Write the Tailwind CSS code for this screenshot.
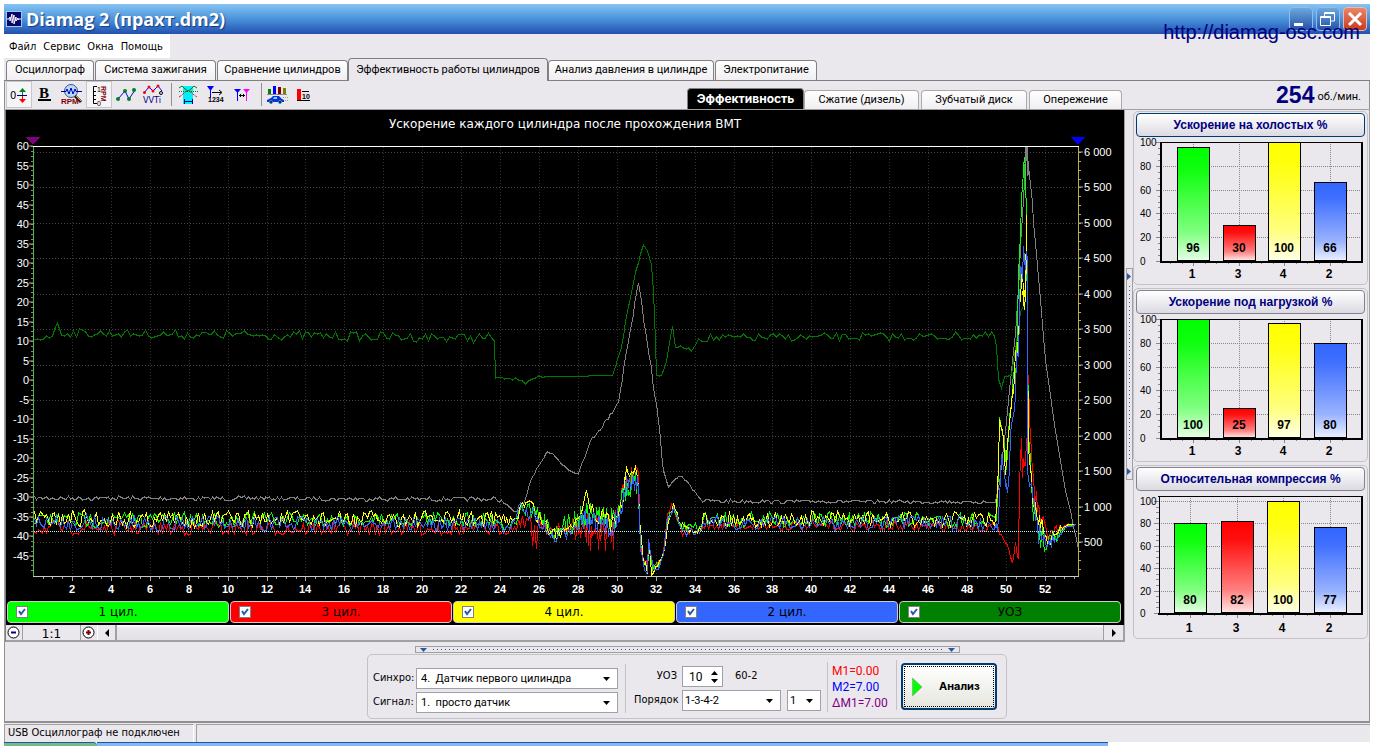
<!DOCTYPE html>
<html lang="ru">
<head>
<meta charset="utf-8">
<title>Diamag 2</title>
<script src="https://cdn.jsdelivr.net/npm/@tailwindcss/browser@4"></script>
</head>
<body class="flex h-screen flex-col overflow-hidden bg-white px-1 pt-1 font-['DejaVu_Sans_Condensed','Liberation_Sans',sans-serif] text-[11px] text-black">
<div class="relative flex min-h-0 flex-1 flex-col bg-[#ebe8ed]">

  <header class="flex h-[30px] shrink-0 items-center justify-between bg-linear-to-b from-[#86c4f2] via-[#4a92dc] via-50% to-[#2450ae] pl-0.5 pr-[3px]">
    <div class="flex items-center gap-1">
      <svg class="size-4" viewBox="0 0 16 16"><rect width="16" height="16" fill="#05056e"/><rect x=".5" y=".5" width="15" height="15" fill="none" stroke="#9cc8f4"/><path d="M1 8H3L4 6V10L6 3V12L8 4V13L10 6V10L12 7V9L13 8H15" fill="none" stroke="#fff"/></svg>
      <h1 class="font-['Open_Sans',sans-serif] text-[18px] font-bold leading-6 text-white [text-shadow:1px_1px_1px_#123a80]">Diamag 2 (прахт.dm2)</h1>
    </div>
    <div class="flex gap-[3px]">
      <button aria-label="Свернуть" class="size-6 rounded-sm border border-[#8fbdf0] bg-linear-to-b from-[#6ea9dc] to-[#2450a8]"><svg viewBox="0 0 22 22"><rect x="4" y="15" width="9" height="3" fill="#fff"/></svg></button>
      <button aria-label="Восстановить" class="size-6 rounded-sm border border-[#8fbdf0] bg-linear-to-b from-[#6ea9dc] to-[#2450a8]"><svg viewBox="0 0 22 22" fill="none" stroke="#fff"><path d="M7.500 8V4.500H17.500V13H14M7 5.500H18M3.500 8.500H13.500V17.500H3.500ZM3 9.500H14"/></svg></button>
      <button aria-label="Закрыть" class="size-6 rounded-sm border border-[#f0b8a8] bg-linear-to-b from-[#ec8468] to-[#c83818]"><svg viewBox="0 0 22 22"><path d="M5 5L17 17M17 5L5 17" stroke="#fff" stroke-width="3"/></svg></button>
    </div>
  </header>
  <a href="http://diamag-osc.com" class="absolute right-[10px] top-4 font-['Liberation_Sans',sans-serif] text-[20px] leading-6 text-[#000080]">http://diamag-osc.com</a>

  <nav class="flex h-6 w-[166px] shrink-0 items-center gap-[7px] bg-white pl-[5px] pt-[3px]">
    <button>Файл</button><button>Сервис</button><button>Окна</button><button>Помощь</button>
  </nav>

  <div role="tablist" class="flex h-[23px] shrink-0 items-end border-b border-[#808080] pl-0.5 font-['Roboto','Liberation_Sans',sans-serif] text-[11px]">
    <button role="tab" class="mr-px h-5 w-[88px] rounded-t-sm border border-b-0 border-[#808080] bg-linear-to-b from-white to-[#f0eef1]">Осциллограф</button>
    <button role="tab" class="mr-px h-5 w-[121px] rounded-t-sm border border-b-0 border-[#808080] bg-linear-to-b from-white to-[#f0eef1]">Система зажигания</button>
    <button role="tab" class="h-5 w-[131px] rounded-t-sm border border-b-0 border-[#808080] bg-linear-to-b from-white to-[#f0eef1]">Сравнение цилиндров</button>
    <button role="tab" aria-selected="true" class="-mb-px h-[23px] w-[200px] rounded-t-sm border border-b-0 border-[#808080] bg-[#ebe8ed]">Эффективность работы цилиндров</button>
    <button role="tab" class="mr-px h-5 w-[166px] rounded-t-sm border border-b-0 border-[#808080] bg-linear-to-b from-white to-[#f0eef1]">Анализ давления в цилиндре</button>
    <button role="tab" class="h-5 w-[102px] rounded-t-sm border border-b-0 border-[#808080] bg-linear-to-b from-white to-[#f0eef1]">Электропитание</button>
  </div>

  <div class="flex h-[28px] shrink-0 border-l border-r border-[#909090]">
    <div class="flex h-[27px] shrink-0 pl-px">
      <button aria-label="Ноль" class="h-[27px] w-[26px] border border-[#c8c6ca] bg-[#f5f4f6]"><svg class="h-[25px] w-6" viewBox="7 82 24 25"><text x="10" y="99" font-size="10" font-family="DejaVu Sans">0</text><path d="M17 95.500H27" stroke="#000080"/><path d="M22.500 88L26 92H19Z" fill="#008020"/><path d="M22.500 91V95" stroke="#008020"/><path d="M22.500 103L26 99H19Z" fill="#f00"/><path d="M22.500 96V100" stroke="#f00"/></svg></button>
      <button aria-label="Жирный" class="h-[27px] w-[26px]"><svg class="h-[27px] w-[26px]" viewBox="32 81 26 27"><text x="39" y="98" font-size="15" font-weight="bold" font-family="Liberation Serif">B</text><path d="M38 100H51" stroke="#000" stroke-width="2"/></svg></button>
      <button aria-label="Поиск RPM" class="h-[27px] w-7"><svg class="h-[27px] w-7" viewBox="58 81 28 27"><circle cx="71" cy="91" r="6.500" fill="#b4d8ff" stroke="#405878"/><path d="M61 91.500H66L67 89 69 94 71 88 73 94 75 89 76 91.500H82" fill="none" stroke="#0000a0"/><path d="M75 96L81 102" stroke="#222" stroke-width="3"/><path d="M76 96L81 101" stroke="#d8a840"/><text x="61" y="104" font-size="8" font-weight="bold" font-family="Liberation Sans" fill="#800000">RPM</text></svg></button>
      <button aria-label="Шкала RPM" class="h-[27px] w-[26px] border border-[#c8c6ca] bg-[#f5f4f6]"><svg class="h-[25px] w-6" viewBox="88 82 24 25"><path d="M98 86.500H94.500V103.500H98M94 91.500H97M94 95.500H97M94 99.500H97" fill="none" stroke="#000"/><text x="98" y="92" font-size="7" font-family="Liberation Sans">1</text><text x="98" y="106" font-size="7" font-family="Liberation Sans">0</text><text transform="translate(102 86) rotate(90)" font-size="7" font-weight="bold" font-family="Liberation Sans" fill="#800000">RPM</text></svg></button>
      <button aria-label="График" class="h-[27px] w-7"><svg class="h-[27px] w-7" viewBox="112 81 28 27"><path d="M118 99L125 91L129 99L135 90" fill="none" stroke="#0000ff"/><g fill="#008020"><circle cx="118" cy="99" r="2"/><circle cx="125" cy="91" r="2"/><circle cx="129" cy="99" r="2"/><circle cx="134" cy="90" r="2"/></g></svg></button>
      <button aria-label="VVTi" class="h-[27px] w-7"><svg class="h-[27px] w-7" viewBox="140 81 28 27"><path d="M144 93L149 87L153 91L158 86L162 91" fill="none" stroke="#0000ff"/><g fill="#f00"><circle cx="144.500" cy="92.500" r="1.500"/><circle cx="149" cy="87" r="1.500"/><circle cx="153" cy="91" r="1.500"/><circle cx="158" cy="86" r="1.500"/></g><circle cx="161" cy="93" r="1.500" fill="none" stroke="#000"/><text x="143" y="103" font-size="9" font-family="DejaVu Sans Condensed" fill="#000080">VVTi</text></svg></button>
      <span class="mx-[3px] my-0.5 w-px bg-[#909090]"></span>
      <button aria-label="Фаза" class="h-[27px] w-7"><svg class="h-[27px] w-7" viewBox="175 81 28 27"><rect x="183" y="86" width="10" height="18" fill="#00f0f8"/><path d="M179 88L182 86L185 89L188 91L191 89L194 86L197 88" fill="none" stroke="#008020"/><path d="M179 97L182 95L185 92L188 91L191 92L194 95L197 97" fill="none" stroke="#e02020" stroke-dasharray="3 1"/><path d="M179 91.500H198" stroke="#008020" stroke-dasharray="1 1"/><path d="M184 101.500H193M184.500 99V104M192.500 99V104" stroke="#0000a0"/></svg></button>
      <button aria-label="Метки цилиндров" class="h-[27px] w-7"><svg class="h-[27px] w-7" viewBox="203 81 28 27"><path d="M207 86H214L210.500 91Z" fill="#00f"/><path d="M210.500 88V98" stroke="#00f"/><path d="M212 92.500H221M219 90L222 92.500L219 95" fill="none" stroke="#000"/><text x="208" y="102" font-size="7" font-weight="bold" font-family="Liberation Sans">1234</text></svg></button>
      <button aria-label="Расстояние" class="h-[27px] w-7"><svg class="h-[27px] w-7" viewBox="231 81 28 27"><path d="M234 89H241L237.500 93Z" fill="#00f"/><path d="M237.500 90V101" stroke="#00f"/><path d="M243 89H250L246.500 93Z" fill="#f0f"/><path d="M246.500 90V101" stroke="#f0f"/><path d="M239 95.500H245M241 94L239.500 95.500L241 97M243 94L244.500 95.500L243 97" stroke="#000" fill="none"/></svg></button>
      <span class="mx-0.5 my-0.5 w-px bg-[#909090]"></span>
      <button aria-label="Автомобиль" class="h-[27px] w-7"><svg class="h-[27px] w-7" viewBox="264 81 28 27"><g stroke-width="3"><path d="M269.500 94V89" stroke="#008000"/><path d="M274.500 94V86" stroke="#00f"/><path d="M279.500 94V87" stroke="#800000"/><path d="M284.500 94V88" stroke="#808000"/></g><path d="M267 94.500H287" stroke="#888"/><path d="M267 100L271 98L273 96H279L282 99L284 100V102H267Z" fill="#1030e0"/><path d="M274 97H277V99H273Z" fill="#60e0f0"/><g fill="#101050" stroke="#20a0a0"><circle cx="271" cy="102" r="1.500"/><circle cx="280" cy="102" r="1.500"/></g><path d="M283 97.500H288M285 100.500H288" stroke="#999" stroke-dasharray="1 1"/></svg></button>
      <button aria-label="Десять" class="h-[27px] w-7"><svg class="h-[27px] w-7" viewBox="292 81 28 27"><rect x="297" y="89" width="4" height="11" fill="#f00"/><path d="M297 100.500H310M302 91.500H309" stroke="#000"/><text x="302" y="99" font-size="7" font-weight="bold" font-family="Liberation Sans">10</text></svg></button>
    </div>
    <div role="tablist" class="ml-auto flex items-end font-['Roboto','Liberation_Sans',sans-serif] text-[11px]">
      <button role="tab" aria-selected="true" class="h-[21px] w-[117px] rounded-t-sm border border-b-0 border-[#808080] bg-black font-['Inter',sans-serif] text-[12px] font-bold text-white">Эффективность</button>
      <button role="tab" class="mr-0.5 h-[19px] w-[115px] rounded-t-sm border border-b-0 border-[#aaa] bg-linear-to-b from-white to-[#f0eef1]">Сжатие (дизель)</button>
      <button role="tab" class="mr-0.5 h-[19px] w-[106px] rounded-t-sm border border-b-0 border-[#aaa] bg-linear-to-b from-white to-[#f0eef1]">Зубчатый диск</button>
      <button role="tab" class="h-[19px] w-[93px] rounded-t-sm border border-b-0 border-[#aaa] bg-linear-to-b from-white to-[#f0eef1]">Опережение</button>
    </div>
    <div class="flex w-[247px] items-center justify-end gap-[3px] pr-2">
      <strong class="font-['Liberation_Sans',sans-serif] text-[23px] leading-6 text-[#000080]">254</strong>
      <span class="pt-1 font-['Roboto',sans-serif] text-[11px]">об./мин.</span>
    </div>
  </div>

  <main class="flex min-h-0 flex-1 border-x border-t border-[#a0a0a0]">
    <section class="flex min-w-0 flex-1 flex-col border-l border-[#808080]">
      <div class="flex min-h-0 flex-1 flex-col bg-black">
        <svg id="scope" class="min-h-0 w-full flex-1" viewBox="6 110 1118 490"></svg>
        <div class="grid shrink-0 grid-cols-5 gap-px px-px pb-0.5 pr-[3px] font-['DejaVu_Sans',sans-serif] text-[12px]">
          <label class="relative flex h-[22px] items-center justify-center rounded border border-[#ccc] bg-[#00ff00]"><input type="checkbox" checked class="absolute left-2 size-3 appearance-none border border-[#808080] bg-white"><svg class="absolute left-2 size-3" viewBox="0 0 12 12"><path d="M3 5L5 8L9 3" fill="none" stroke="#2858a8" stroke-width="2"/></svg>1 цил.</label>
          <label class="relative flex h-[22px] items-center justify-center rounded border border-[#ccc] bg-[#ff0000]"><input type="checkbox" checked class="absolute left-2 size-3 appearance-none border border-[#808080] bg-white"><svg class="absolute left-2 size-3" viewBox="0 0 12 12"><path d="M3 5L5 8L9 3" fill="none" stroke="#2858a8" stroke-width="2"/></svg>3 цил.</label>
          <label class="relative flex h-[22px] items-center justify-center rounded border border-[#ccc] bg-[#ffff00]"><input type="checkbox" checked class="absolute left-2 size-3 appearance-none border border-[#808080] bg-white"><svg class="absolute left-2 size-3" viewBox="0 0 12 12"><path d="M3 5L5 8L9 3" fill="none" stroke="#2858a8" stroke-width="2"/></svg>4 цил.</label>
          <label class="relative flex h-[22px] items-center justify-center rounded border border-[#ccc] bg-[#3366ff]"><input type="checkbox" checked class="absolute left-2 size-3 appearance-none border border-[#808080] bg-white"><svg class="absolute left-2 size-3" viewBox="0 0 12 12"><path d="M3 5L5 8L9 3" fill="none" stroke="#2858a8" stroke-width="2"/></svg>2 цил.</label>
          <label class="relative flex h-[22px] items-center justify-center rounded border border-[#ccc] bg-[#008000]"><input type="checkbox" checked class="absolute left-2 size-3 appearance-none border border-[#808080] bg-white"><svg class="absolute left-2 size-3" viewBox="0 0 12 12"><path d="M3 5L5 8L9 3" fill="none" stroke="#2858a8" stroke-width="2"/></svg>УОЗ</label>
        </div>
      </div>
      <div class="flex h-[17px] shrink-0 border-b-2 border-[#a0a0a0]">
        <button aria-label="Уменьшить" class="w-[17px] border-r border-[#a0a0a0]"><svg class="size-[15px]" viewBox="0 0 15 15"><circle cx="7.500" cy="7.500" r="5.500" fill="#fff" stroke="#000"/><path d="M5 7.500H10" stroke="#000080" stroke-width="2"/></svg></button>
        <output class="w-[58px] border-r border-[#a0a0a0] pt-px text-center font-['DejaVu_Sans',sans-serif] text-[12px] leading-4">1:1</output>
        <button aria-label="Увеличить" class="w-[17px] border-r border-white"><svg class="size-[15px]" viewBox="0 0 15 15"><circle cx="7.500" cy="7.500" r="5.500" fill="#fff" stroke="#000"/><path d="M5 7.500H10M7.500 5V10" stroke="#800000" stroke-width="2"/></svg></button>
        <button aria-label="Влево" class="flex w-[18px] items-center justify-center border-r border-[#a0a0a0]"><svg class="h-2 w-1" viewBox="0 0 4 8"><path d="M4 0V8L0 4Z"/></svg></button>
        <span class="flex-1 border-x border-[#a0a0a0] bg-linear-to-b from-white via-[#ebe8ed] via-20% to-[#e4e1e6]"></span>
        <button aria-label="Вправо" class="flex w-5 items-center justify-center border-r border-[#a0a0a0]"><svg class="h-2 w-1" viewBox="0 0 4 8"><path d="M0 0V8L4 4Z"/></svg></button>
      </div>
    </section>

    <div class="flex w-[9px] shrink-0 items-center justify-center border-l border-[#a0a0a0]">
      <button aria-label="Скрыть панель" class="mb-1 flex h-[212px] w-[7px] flex-col items-center justify-between border border-[#a0a0a0] py-1">
        <svg class="h-[7px] w-1" viewBox="0 0 4 7"><path d="M0 0V7L4 3.500Z" fill="#2858a8"/></svg>
        <span class="my-1.5 w-px flex-1 bg-[repeating-linear-gradient(to_bottom,#2858a8_0_1px,transparent_1px_4px)]"></span>
        <svg class="h-[7px] w-1" viewBox="0 0 4 7"><path d="M0 0V7L4 3.500Z" fill="#2858a8"/></svg>
      </button>
    </div>

    <aside class="flex w-[236px] shrink-0 flex-col gap-[3px] pr-px pt-px font-['Liberation_Sans',sans-serif]">
      <section class="h-[174px] rounded-[5px] border border-[#c4c2c8] px-0.5 pt-px">
        <button class="block h-6 w-full rounded-sm border border-[#003c74] bg-linear-to-b from-white to-[#dcdae2] text-[12px] font-bold leading-4 text-[#000080]">Ускорение на холостых %</button>
        <svg class="bars mt-px w-full" viewBox="1136 138 229 145"></svg>
      </section>
      <section class="h-[174px] rounded-[5px] border border-[#c4c2c8] px-0.5 pt-px">
        <button class="block h-6 w-full rounded-sm border border-[#84828c] bg-linear-to-b from-white to-[#dcdae2] text-[12px] font-bold leading-4 text-[#000080]">Ускорение под нагрузкой %</button>
        <svg class="bars mt-px w-full" viewBox="1136 138 229 145"></svg>
      </section>
      <section class="h-[174px] rounded-[5px] border border-[#c4c2c8] px-0.5 pt-px">
        <button class="block h-6 w-full rounded-sm border border-[#84828c] bg-linear-to-b from-white to-[#dcdae2] text-[12px] font-bold leading-4 text-[#000080]">Относительная компрессия %</button>
        <svg class="bars mt-px w-full" viewBox="1136 138 229 145"></svg>
      </section>
    </aside>
  </main>

  <section class="flex h-[81px] shrink-0 flex-col items-center border-x border-b-2 border-[#909090] pt-1">
    <button aria-label="Скрыть настройки" class="flex h-[7px] w-[545px] shrink-0 items-center justify-between border border-[#a0a0a0] px-1">
      <svg class="h-1 w-[7px]" viewBox="0 0 7 4"><path d="M0 0H7L3.500 4Z" fill="#2858a8"/></svg>
      <span class="mx-1.5 h-px flex-1 bg-[repeating-linear-gradient(to_right,#2858a8_0_1px,transparent_1px_4px)]"></span>
      <svg class="h-1 w-[7px]" viewBox="0 0 7 4"><path d="M0 0H7L3.500 4Z" fill="#2858a8"/></svg>
    </button>
    <form class="mt-px flex h-[65px] w-[640px] shrink-0 rounded-[5px] border border-[#c4c2c8] pl-[5px]">
      <div class="grid grid-cols-[43px_202px] content-start items-center gap-y-[3px] pt-[13px]">
        <label for="sync">Синхро:</label>
        <div class="relative"><select id="sync" class="block h-[21px] w-full appearance-none border border-[#a0a0a8] bg-white pl-1 font-['Roboto',sans-serif] text-[11px] leading-4"><option>4.&nbsp; Датчик первого цилиндра</option></select><svg class="pointer-events-none absolute right-2 top-[9px] h-1 w-[7px]" viewBox="0 0 7 4"><path d="M0 0H7L3.500 4Z"/></svg></div>
        <label for="signal">Сигнал:</label>
        <div class="relative"><select id="signal" class="block h-[21px] w-full appearance-none border border-[#a0a0a8] bg-white pl-1 font-['Roboto',sans-serif] text-[11px] leading-4"><option>1.&nbsp; просто датчик</option></select><svg class="pointer-events-none absolute right-2 top-[9px] h-1 w-[7px]" viewBox="0 0 7 4"><path d="M0 0H7L3.500 4Z"/></svg></div>
      </div>
      <span class="ml-[7px] mt-[9px] h-[49px] w-px bg-[#c4c2c8]"></span>
      <div class="ml-2 grid w-[188px] grid-cols-[43px_1fr] content-start items-center gap-x-[5px] gap-y-[3px] pt-[11px]">
        <label for="uoz" class="text-right">УОЗ</label>
        <div class="flex items-center gap-3">
          <div class="flex h-[21px] w-[41px] items-center justify-between border border-[#a0a0a8] bg-white pr-1"><input id="uoz" value="10" class="w-7 pl-1.5 font-['Roboto',sans-serif] text-[12px] outline-none"><svg class="h-3 w-[7px] shrink-0" viewBox="0 0 7 12"><path d="M0 4H7L3.500 0ZM0 8H7L3.500 12Z"/></svg></div>
          <span>60-2</span>
        </div>
        <label for="order" class="text-right">Порядок</label>
        <div class="flex gap-[6px]">
          <div class="relative"><select id="order" class="block h-[21px] w-[99px] appearance-none border border-[#a0a0a8] bg-white pl-[2px] font-['Roboto',sans-serif] text-[11px] leading-4"><option>1-3-4-2</option></select><svg class="pointer-events-none absolute right-2 top-[9px] h-1 w-[7px]" viewBox="0 0 7 4"><path d="M0 0H7L3.500 4Z"/></svg></div>
          <div class="relative"><select aria-label="Цилиндр" class="block h-[21px] w-[34px] appearance-none border border-[#a0a0a8] bg-white pl-[2px] font-['Roboto',sans-serif] text-[11px] leading-4"><option>1</option></select><svg class="pointer-events-none absolute right-2 top-[9px] h-1 w-[7px]" viewBox="0 0 7 4"><path d="M0 0H7L3.500 4Z"/></svg></div>
        </div>
      </div>
      <span class="ml-[5px] mt-[7px] h-[50px] w-px bg-[#c4c2c8]"></span>
      <div class="ml-1 w-16 pt-2 font-['Roboto',sans-serif] text-[12px] leading-4">
        <p class="text-[#f00]">M1=0.00</p><p class="text-[#00f]">M2=7.00</p><p class="text-[#800080]">ΔM1=7.00</p>
      </div>
      <span class="mt-[5px] h-[50px] w-px bg-[#c4c2c8]"></span>
      <button type="button" class="ml-1 mt-2 flex h-[47px] w-[96px] rounded-sm border-2 border-[#003c74] bg-linear-to-b from-white to-[#e6e6de] p-px font-['Inter',sans-serif] text-[11px] font-bold"><span class="flex size-full items-center gap-[17px] border border-dotted border-black pl-[7px]"><svg class="h-5 w-[10px]" viewBox="0 0 10 20"><path d="M.5 1V19L10 10Z" fill="#0f0" stroke="#888" stroke-width=".5"/></svg>Анализ</span></button>
    </form>
  </section>

  <footer class="flex h-[19px] shrink-0 gap-0.5 pt-px">
    <span class="w-[190px] border-l border-t border-r border-[#a0a0a0] border-r-white pl-[3px] leading-4">USB Осциллограф не подключен</span>
    <span class="flex-1 border-l border-t border-[#a0a0a0]"></span>
  </footer>
</div>
<div class="flex h-1 shrink-0 pr-[262px]">
  <span class="w-[93px] rounded-tr border-t border-[#2450ae] bg-[#74bc80]"></span><span class="flex-1 border-t border-[#2450ae] bg-[#7ebcf0]"></span>
</div>

<script>
let seed = 7;
const rnd = () => (seed = (seed * 16807) % 2147483647) / 2147483647 * 2 - 1;

// Polyline through [x, y, noise amplitude] points, sampled every `step` pixels;
// noisy stretches are sampled at every pixel.
function trace(points, color, step) {
  const out = [];
  for (let i = 0; i < points.length - 1; i++) {
    const [x0, y0, a0] = points[i], [x1, y1, a1] = points[i + 1];
    const n = Math.max(1, Math.round((x1 - x0) / (a0 > 9 ? 1 : step)));
    for (let k = 0; k < n; k++) {
      const t = k / n;
      const y = y0 + (y1 - y0) * t + rnd() * (a0 + (a1 - a0) * t);
      out.push(Math.round(x0 + (x1 - x0) * t) + '.5,' + Math.max(146, Math.min(574, Math.round(y))) + '.5');
    }
  }
  const last = points[points.length - 1];
  out.push(last[0] + ',' + last[1]);
  return `<polyline points="${out.join(' ')}" fill="none" stroke="${color}"/>`;
}
const line = (x1, y1, x2, y2, c, extra = '') => `<path d="M${x1} ${y1}L${x2} ${y2}" stroke="${c}" ${extra}/>`;

let s = '<rect x="6" y="110" width="1118" height="490" fill="#000"/><g shape-rendering="crispEdges">';
for (let t = 2; t <= 52; t += 2) { const x = Math.round(33 + t * 19.46) + .5; s += line(x, 146, x, 575, '#303030', 'stroke-dasharray="1 2"'); }
for (let r = 500; r <= 6000; r += 500) { const y = Math.round(151 + (6000 - r) * .0709) + .5; s += line(34, y, 1078, y, '#484848', 'stroke-dasharray="1 2"'); }

s += trace([[34,497,2],[495,498,2],[503,501,1],[513,510,0],[518,510,1],[523,503,1],[530,482,2],[540,461,1],[547,450,1],[552,452,1],[560,462,1],[570,470,1],[578,472,1],[584,455,2],[592,437,2],[600,427,2],[610,414,2],[618,400,2],[627,345,2],[638,282,0],[645,330,2],[656,405,2],[663,470,1],[668,486,0],[673,480,0],[680,474,1],[690,485,1],[702,500,2],[995,501,1],[999,482,0],[1005,430,0],[1015,330,3],[1022,215,3],[1025,146,0],[1028,165,0],[1035,240,3],[1045,360,2],[1055,430,0],[1065,490,0],[1078,546,0]], '#808080', 2);
s += line(1026.5, 146, 1028.5, 175, '#808080', 'stroke-width="2"');
s += trace([[34,338,4],[52,334,3],[57,322,1],[61,332,4],[494,337,5],[495,377,2],[518,378,1],[525,381,2],[535,376,1],[612,374,0],[620,350,1],[628,305,1],[635,270,1],[643,244,0],[647,250,0],[651,264,0],[653,290,0],[655,340,0],[656,374,1],[661,374,1],[666,360,1],[672,325,0],[675,345,1],[680,346,1],[691,349,1],[698,338,2],[710,337,4],[994,335,4],[996,346,0],[998,378,0],[1001,387,0],[1004,376,0],[1011,373,0],[1015,350,2],[1020,310,1],[1025,300,0]], '#007800', 3);

s += trace([[34,527,7],[497,528,7],[512,528,5],[520,520,7],[528,519,9],[531,530,9],[532,545,0],[534,520,8],[536,548,0],[538,520,9],[548,526,9],[556,533,8],[568,525,9],[577,530,18],[590,530,24],[613,530,20],[617,505,15],[622,490,12],[628,478,10],[635,468,7],[638,470,3],[640,545,5],[644,560,5],[647,560,6],[649,545,5],[652,568,3],[658,562,3],[663,553,3],[667,510,5],[673,508,6],[680,530,6],[697,533,6],[704,524,5],[994,526,5],[1001,533,1],[1007,545,2],[1012,560,3],[1015,547,8],[1018,550,8],[1019,480,3],[1021,450,20],[1024,465,30],[1027,440,20],[1028,374,0],[1029,430,10],[1034,490,12],[1040,520,10],[1048,535,10],[1060,528,4],[1068,524,1],[1075,524,0]], '#ff0000', 2);
s += trace([[34,519,8],[497,518,7],[503,527,4],[514,522,5],[521,508,5],[535,512,10],[550,525,9],[556,533,9],[568,522,12],[590,512,12],[612,522,18],[617,510,12],[622,490,14],[628,486,14],[637,484,14],[640,540,6],[644,560,5],[647,568,5],[649,545,5],[652,565,4],[658,565,3],[663,553,3],[667,520,5],[673,510,3],[680,526,6],[697,525,7],[703,518,8],[994,519,8],[996,520,4],[999,416,0],[1003,445,10],[1006,465,8],[1010,425,20],[1016,345,20],[1020,240,25],[1022,190,25],[1025,165,15],[1026,225,8],[1028,440,8],[1033,505,18],[1039,535,15],[1048,542,10],[1060,531,4],[1068,524,1],[1075,524,0]], '#00ff00', 2);
s += trace([[34,518,9],[497,518,8],[512,519,5],[520,508,8],[527,500,8],[535,512,9],[550,530,9],[556,535,9],[568,522,9],[580,515,9],[586,489,0],[590,508,9],[612,523,9],[617,510,12],[622,490,17],[627,470,8],[637,475,12],[640,530,6],[643,562,8],[647,569,5],[648,540,2],[651,574,2],[655,565,3],[663,553,3],[667,525,5],[673,505,3],[680,525,6],[697,529,5],[703,518,8],[994,519,8],[996,510,2],[999,420,2],[1002,430,10],[1005,470,8],[1009,430,12],[1014,380,18],[1019,310,22],[1022,278,18],[1025,300,16],[1026,215,2],[1028,450,10],[1033,505,10],[1040,525,10],[1048,538,8],[1060,528,3],[1068,523,1],[1076,524,0]], '#ffff00', 2);
s += trace([[34,522,8],[497,523,7],[503,530,4],[514,523,5],[520,504,8],[535,517,9],[550,535,9],[556,539,7],[568,530,9],[579,515,12],[590,522,12],[612,528,10],[618,510,14],[624,490,14],[630,485,12],[637,475,12],[640,548,7],[644,570,4],[647,570,3],[648,540,2],[652,565,4],[658,565,3],[663,553,3],[667,520,5],[673,508,4],[680,530,5],[697,532,5],[703,522,7],[994,522,8],[997,530,5],[1001,455,8],[1004,470,12],[1007,490,6],[1012,425,20],[1018,340,22],[1021,260,25],[1025,258,18],[1026,250,0],[1027,260,0],[1027,470,0],[1031,490,15],[1037,530,12],[1046,545,10],[1055,536,6],[1068,525,1],[1076,524,0]], '#3366ff', 2);
s += trace([[1022,282,12],[1023,290,16],[1024,300,18],[1025,290,16],[1026,300,0]], '#ffff00', 1);
s += line(34, 530.5, 1078, 530.5, '#a0ffff', 'stroke-dasharray="1 1"');
s += line(33, 145.5, 1079, 145.5, '#fff') + line(33, 575.5, 1079, 575.5, '#c8c8c8') + line(33.5, 146, 33.5, 575, '#50b850') + line(1078.5, 146, 1078.5, 575, '#b8b040');
for (let i = 0; i <= 109; i++) { const y = Math.round(145 + i * 4.875) + .5; if (y < 574) s += line(31, y, 33, y, '#888'); }
for (let i = 0; i <= 60; i++) { const y = Math.round(151 + i * 8.8625) + .5; if (y < 574) s += line(1079, y, 1081, y, '#aaa'); }
for (let i = 1; i <= 107; i++) { const x = Math.round(33 + i * 9.73) + .5; if (x < 1079) s += line(x, 576, x, i % 4 ? 578 : 580, '#aaa'); }
s += '<path d="M25 136H41L33 144Z" fill="#800080"/><path d="M1070 136H1086L1078 144Z" fill="#00f"/></g>';
s += '<g fill="#fff" font-family="Liberation Sans" font-size="11">';
for (let v = 60; v >= -45; v -= 5) { const y = Math.round(145 + (60 - v) * 3.9); s += `<text x="29" y="${y + 4}" text-anchor="end">${v}</text>` + line(29, y + .5, 33, y + .5, '#aaa'); }
for (let r = 6000; r >= 500; r -= 500) { const y = Math.round(151 + (6000 - r) * .0709); s += `<text x="1084" y="${y + 4}">${r >= 1000 ? Math.floor(r / 1000) + ' ' + String(r % 1000).padStart(3, '0') : r}</text>` + line(1079, y + .5, 1083, y + .5, '#aaa'); }
for (let t = 2; t <= 52; t += 2) s += `<text x="${Math.round(33 + t * 19.46)}" y="592" text-anchor="middle" font-weight="bold">${t}</text>`;
s += '</g><text x="565" y="127" text-anchor="middle" fill="#fff" font-family="DejaVu Sans" font-size="12">Ускорение каждого цилиндра после прохождения ВМТ</text>';
document.getElementById('scope').innerHTML = s;

// Cylinder comparison charts: values in firing order 1-3-4-2.
const charts = [
  { v: [96, 30, 100, 66], x: [1177, 1223, 1268, 1314], left: 1161, top: 142, y100: 142, y0: 261 },
  { v: [100, 25, 97, 80], x: [1177, 1223, 1268, 1314], left: 1161, top: 142, y100: 142, y0: 261 },
  { v: [80, 82, 100, 77], x: [1174, 1221, 1267, 1314], left: 1159, top: 142, y100: 147, y0: 259 },
];
const colors = ['#00ff00', '#ff0000', '#ffff00', '#3366ff'];
document.querySelectorAll('svg.bars').forEach((el, n) => {
  const c = charts[n];
  const Y = v => Math.round(c.y0 - (c.y0 - c.y100) * v / 100);
  let g = '<defs>' + colors.map((k, i) => `<linearGradient id="g${n}${i}" x2="0" y2="1"><stop stop-color="${k}"/><stop offset=".2" stop-color="${k}" stop-opacity=".94"/><stop offset=".75" stop-color="${k}" stop-opacity=".5"/><stop offset="1" stop-color="${k}" stop-opacity=".1"/></linearGradient>`).join('') + '</defs><g shape-rendering="crispEdges">';
  for (let v = 0; v <= 100; v += 20) {
    const y = Y(v) + .5;
    if (v) g += line(c.left, y, 1362, y, '#888', 'stroke-dasharray="1 1"');
    g += line(c.left - 5, y, c.left, y, '#888');
    for (let k = 5; k < 20 && v < 100; k += 5) g += line(c.left - 3, Y(v + k) + .5, c.left, Y(v + k) + .5, '#888');
  }
  c.x.forEach(x => { g += line(x + 16.5, c.top, x + 16.5, c.y0, '#888', 'stroke-dasharray="1 1"') + line(x + 16.5, c.y0, x + 16.5, c.y0 + 5, '#888'); for (const d of [-7, 5, 28]) g += line(x + d + .5, c.y0, x + d + .5, c.y0 + 3, '#888'); });
  g += line(c.left - 1, c.top + .5, 1363, c.top + .5, '#000') + line(1362, c.top, 1362, c.y0 + 1, '#000', 'stroke-width="2"') + line(c.left, c.top, c.left, c.y0 + 1, '#000', n < 2 ? 'stroke-width="2"' : '') + line(c.left - 1, c.y0 + .5, 1363, c.y0 + .5, '#000', 'stroke-width="2"');
  c.v.forEach((v, i) => { g += `<rect x="${c.x[i] + .5}" y="${Y(v) + .5}" width="32" height="${c.y0 - Y(v) - 1}" fill="#fff"/><rect x="${c.x[i] + .5}" y="${Y(v) + .5}" width="32" height="${c.y0 - Y(v) - 1}" fill="url(#g${n}${i})" stroke="#000"/>`; });
  g += '</g><g font-family="Liberation Sans">';
  for (let v = 0; v <= 100; v += 20) g += `<text x="1140" y="${Y(v) + 4}" font-size="10">${v}</text>`;
  c.v.forEach((v, i) => { g += `<text x="${c.x[i] + 16}" y="${c.y0 - 9}" text-anchor="middle" font-size="12" font-weight="bold">${v}</text><text x="${c.x[i] + 15}" y="${c.y0 + (n < 2 ? 17 : 19)}" text-anchor="middle" font-size="12" font-weight="bold">${[1, 3, 4, 2][i]}</text>`; });
  el.innerHTML = g + '</g>';
});
</script>
</body>
</html>
